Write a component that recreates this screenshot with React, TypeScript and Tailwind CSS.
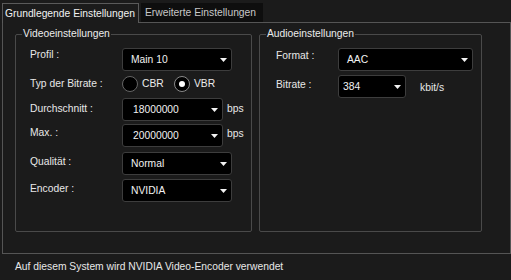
import React from 'react'

const FONT = { fontFamily: '"Liberation Sans", Arial, sans-serif' }

function Arrow() {
  return (
    <svg width="7" height="4" viewBox="0 0 7 4" className="shrink-0">
      <polygon points="0,0 7,0 3.5,4" fill="#f2f2f2" />
    </svg>
  )
}

// Dark-themed dropdown, fixed height like the native control.
function Combo({ w, value, pad = 8 }: { w: string; value: string; pad?: number }) {
  return (
    <div
      className={`flex h-[23px] shrink-0 items-center rounded-[3px] border border-[#3d3d3d] bg-black pr-[4px] ${w}`}
    >
      <span className="flex-1 pt-px text-[#f2f2f2]" style={{ paddingLeft: pad }}>
        {value}
      </span>
      <Arrow />
    </div>
  )
}

function Radio({ label, checked }: { label: string; checked?: boolean }) {
  return (
    <div className="flex items-center gap-[4px]">
      <span
        className={`grid h-[16px] w-[16px] place-items-center rounded-full border bg-black ${
          checked ? 'border-[#8a8a8a]' : 'border-[#666666]'
        }`}
      >
        {checked && <span className="h-[6px] w-[6px] rounded-full bg-white" />}
      </span>
      <span className="text-[#ececec]">{label}</span>
    </div>
  )
}

function Group({
  title,
  w,
  children,
}: {
  title: string
  w: string
  children: React.ReactNode
}) {
  return (
    <div className={`relative h-[198px] shrink-0 rounded-[2px] border border-[#4a4a4a] ${w}`}>
      <span className="absolute left-[6px] top-[-7px] bg-[#1b1b1b] px-px leading-[12px] text-[#ececec]">
        {title}
      </span>
      {children}
    </div>
  )
}

export default function App() {
  return (
    <div
      className="flex h-[280px] w-[511px] flex-col overflow-hidden bg-[#1b1b1b] text-[10.3px] leading-[12px] text-[#e8e8e8]"
      style={FONT}
    >
      {/* tabs */}
      <div className="flex h-[22px] shrink-0 items-end">
        <div className="relative z-10 mb-[-1px] ml-[2px] flex h-[20px] w-[137px] items-center border border-b-0 border-[#5a5a5a] bg-[#1b1b1b] pl-[2px] text-[#f2f2f2]">
          Grundlegende Einstellungen
        </div>
        <div className="ml-[2px] flex h-[19px] w-[122px] items-center bg-[#0e0e0e] pl-[4px] text-[#c8c8c8]">
          Erweiterte Einstellungen
        </div>
      </div>

      {/* page */}
      <div className="ml-[2px] flex h-[232px] w-[509px] shrink-0 gap-[7px] border border-[#555555] pl-[12px] pt-[11px]">
        <Group title="Videoeinstellungen" w="w-[237px]">
          <div className="flex flex-col pl-[14px] pt-[13px]">
            <div className="flex h-[23px] items-start">
              <span className="w-[92px] pt-px">Profil :</span>
              <Combo w="w-[110px]" value="Main 10" />
            </div>
            <div className="mt-px flex h-[23px] items-center">
              <span className="w-[92px]">Typ der Bitrate :</span>
              <div className="w-[52px]">
                <Radio label="CBR" />
              </div>
              <Radio label="VBR" checked />
            </div>
            <div className="mt-[3px] flex h-[23px] items-start">
              <span className="w-[92px] pt-[5px]">Durchschnitt :</span>
              <Combo w="w-[101px]" value="18000000" pad={10} />
              <span className="pl-[4px] pt-[5px]">bps</span>
            </div>
            <div className="mt-[3px] flex h-[23px] items-start">
              <span className="w-[92px] pt-[3px]">Max. :</span>
              <Combo w="w-[101px]" value="20000000" pad={10} />
              <span className="pl-[4px] pt-[4px]">bps</span>
            </div>
            <div className="mt-[5px] flex h-[23px] items-start">
              <span className="w-[92px] pt-[4px]">Qualität :</span>
              <Combo w="w-[110px]" value="Normal" />
            </div>
            <div className="mt-[4px] flex h-[23px] items-start">
              <span className="w-[92px] pt-[4px]">Encoder :</span>
              <Combo w="w-[110px]" value="NVIDIA" />
            </div>
          </div>
        </Group>

        <Group title="Audioeinstellungen" w="w-[223px]">
          <div className="flex flex-col pl-[16px] pt-[13px]">
            <div className="flex h-[23px] items-start">
              <span className="w-[62px] pt-[2px]">Format :</span>
              <Combo w="w-[135px]" value="AAC" />
            </div>
            <div className="mt-[4px] flex h-[23px] items-start">
              <span className="w-[62px] pt-[4px]">Bitrate :</span>
              <Combo w="w-[68px]" value="384" pad={4} />
              <span className="pl-[14px] pt-[7px]">kbit/s</span>
            </div>
          </div>
        </Group>
      </div>

      {/* status */}
      <div className="flex h-[26px] items-center pl-[15px]">
        Auf diesem System wird NVIDIA Video-Encoder verwendet
      </div>
    </div>
  )
}
